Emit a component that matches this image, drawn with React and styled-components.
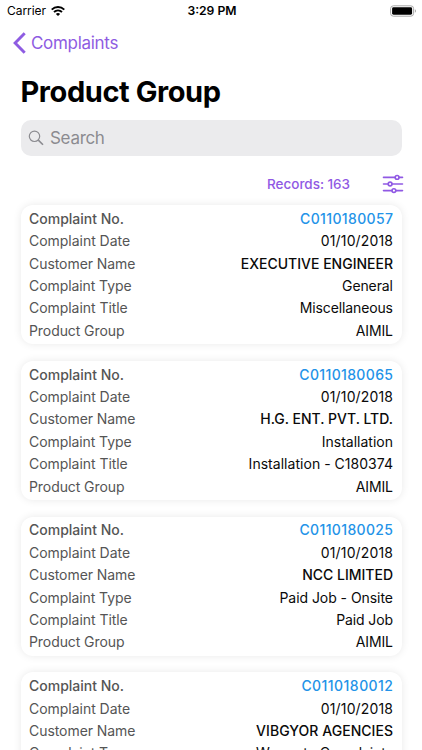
import React from 'react';
import styled, { createGlobalStyle } from 'styled-components';

const GlobalStyle = createGlobalStyle`
  * { box-sizing: border-box; }
  html, body { margin: 0; padding: 0; background: #fff; }
  body { overflow: hidden; }
`;

const Screen = styled.main`
  width: 422px;
  height: 750px;
  overflow: hidden;
  background: #fff;
  color: #000;
  font-family: Inter, 'Liberation Sans', sans-serif;
  display: flex;
  flex-direction: column;
`;

const StatusBar = styled.header`
  flex: none;
  height: 22px;
  padding: 0 5px 0 7px;
  display: grid;
  grid-template-columns: 1fr auto 1fr;
  align-items: center;
`;

const Carrier = styled.div`
  display: flex;
  align-items: center;
  gap: 5px;
  padding-bottom: 1px;
  font-size: 12px;
  letter-spacing: -0.05px;
`;

const Clock = styled.div`
  padding-bottom: 1px;
  font-size: 12.2px;
  font-weight: 600;
  white-space: nowrap;
`;

const Battery = styled.svg`
  justify-self: end;
  display: block;
  margin-bottom: 1px;
`;

const BackLink = styled.nav`
  flex: none;
  height: 42px;
  padding-left: 13px;
  display: flex;
  align-items: center;
  gap: 5px;
  color: #8e5ce2;
  font-size: 17px;
  letter-spacing: -0.3px;
`;

const Title = styled.h1`
  flex: none;
  margin: 0;
  height: 56px;
  padding-left: 20.5px;
  line-height: 56px;
  font-size: 29px;
  font-weight: 700;
  letter-spacing: -0.42px;
`;

const SearchField = styled.div`
  flex: none;
  height: 36px;
  margin: 0 20.5px 0 21px;
  padding: 0 0 1px 7px;
  border-radius: 10px;
  background: #ebebed;
  color: #8b8b90;
  display: flex;
  align-items: center;
  gap: 6px;
  font-size: 17px;
  letter-spacing: -0.3px;
`;

const Summary = styled.div`
  flex: none;
  height: 49px;
  padding: 7px 18px 0 0;
  display: flex;
  align-items: center;
  justify-content: flex-end;
  gap: 32px;
  color: #9059e4;
  font-size: 13.5px;
  font-weight: 500;
  letter-spacing: -0.03px;
`;

const List = styled.div`
  display: flex;
  flex-direction: column;
  gap: 16.4px;
  padding: 0 20.5px 0 21px;
`;

const Card = styled.section`
  flex: none;
  height: 139.4px;
  padding: 2.1px 8.5px 0 8px;
  border-radius: 12px;
  background: #fff;
  box-shadow: 0 0 8px rgba(0, 0, 0, 0.09);
`;

const Row = styled.div`
  height: 22.4px;
  display: flex;
  align-items: center;
  justify-content: space-between;
  font-size: 14px;
  white-space: nowrap;
`;

const Label = styled.span`
  color: #555;
  font-weight: ${(p) => (p.$strong ? 500 : 400)};
  letter-spacing: ${(p) => p.$track || 0}px;
`;

const Value = styled.span`
  color: ${(p) => (p.$link ? '#2393e8' : '#0a0a0a')};
  font-weight: ${(p) => (p.$strong ? 500 : 400)};
  letter-spacing: ${(p) => p.$track || 0}px;
  margin-right: ${(p) => -(p.$track || 0)}px;
`;

const FIELDS = [
  { name: 'Complaint No.', strong: true, track: 0 },
  { name: 'Complaint Date', track: -0.03 },
  { name: 'Customer Name', track: -0.06 },
  { name: 'Complaint Type', track: -0.08 },
  { name: 'Complaint Title', track: -0.05 },
  { name: 'Product Group', track: -0.08 },
];

const COMPLAINTS = [
  [['C0110180057', 0.36], ['01/10/2018', 0.15], ['EXECUTIVE ENGINEER', 0], ['General', -0.1], ['Miscellaneous', -0.12], ['AIMIL', -0.15]],
  [['C0110180065', 0.36], ['01/10/2018', 0.15], ['H.G. ENT. PVT. LTD.', 0], ['Installation', 0], ['Installation - C180374', 0.03], ['AIMIL', -0.15]],
  [['C0110180025', 0.36], ['01/10/2018', 0.15], ['NCC LIMITED', 0], ['Paid Job - Onsite', -0.05], ['Paid Job', -0.12], ['AIMIL', -0.15]],
  [['C0110180012', 0.45], ['01/10/2018', 0.15], ['VIBGYOR AGENCIES', 0.04], ['Warranty Complaints', -0.1]],
];

export default function App() {
  return (
    <>
      <GlobalStyle />
      <Screen>
        <StatusBar>
          <Carrier>
            Carrier
            <svg width="14" height="10" viewBox="0 0 14 10" fill="none" stroke="#000" strokeWidth="1.9">
              <path d="M0.7 3.6C4.3 0.1 9.7 0.1 13.3 3.6" />
              <path d="M3 6C5.3 3.9 8.7 3.9 11 6" />
              <path d="M4.9 7.9C6.1 6.8 7.9 6.8 9.1 7.9L7 10Z" fill="#000" stroke="none" />
            </svg>
          </Carrier>
          <Clock>3:29 PM</Clock>
          <Battery width="27" height="12" viewBox="0 0 27 12">
            <rect x="0.6" y="0.8" width="23" height="10.4" rx="2.8" fill="#fff" stroke="#a8a8a8" />
            <rect x="2.1" y="2.3" width="20" height="7.4" rx="1.4" fill="#000" />
            <path d="M24.9 4.3C26.4 4.8 26.4 7.2 24.9 7.7Z" fill="#a8a8a8" />
          </Battery>
        </StatusBar>
        <BackLink>
          <svg width="13" height="22" viewBox="0 0 13 22" fill="none" stroke="#8e5ce2" strokeWidth="2.9">
            <path d="M11.7 1.2L2.1 11L11.7 20.8" />
          </svg>
          Complaints
        </BackLink>
        <Title>Product Group</Title>
        <SearchField>
          <svg width="16" height="16" viewBox="0 0 16 16" fill="none" stroke="#8b8b90" strokeWidth="1.2">
            <circle cx="6.5" cy="6.3" r="5.2" />
            <path d="M10.3 10.1L15 14.8" strokeWidth="1.6" />
          </svg>
          Search
        </SearchField>
        <Summary>
          Records: 163
          <svg width="22" height="20" viewBox="0 0 22 20" fill="none" stroke="#9059e4" strokeWidth="1.6" strokeLinecap="round">
            <path d="M1.5 3.4H13.2M17 3.4H20.5M1.5 10H6.2M10 10H20.5M1.5 16.6H10M13.8 16.6H20.5" />
            <circle cx="15.1" cy="3.4" r="1.9" />
            <circle cx="8.1" cy="10" r="1.9" />
            <circle cx="11.9" cy="16.6" r="1.9" />
          </svg>
        </Summary>
        <List>
          {COMPLAINTS.map((values) => (
            <Card key={values[0][0]}>
              {values.map(([text, track], i) => (
                <Row key={FIELDS[i].name}>
                  <Label $strong={FIELDS[i].strong} $track={FIELDS[i].track}>{FIELDS[i].name}</Label>
                  <Value $link={i === 0} $strong={i === 0 || i === 2} $track={track}>{text}</Value>
                </Row>
              ))}
            </Card>
          ))}
        </List>
      </Screen>
    </>
  );
}
